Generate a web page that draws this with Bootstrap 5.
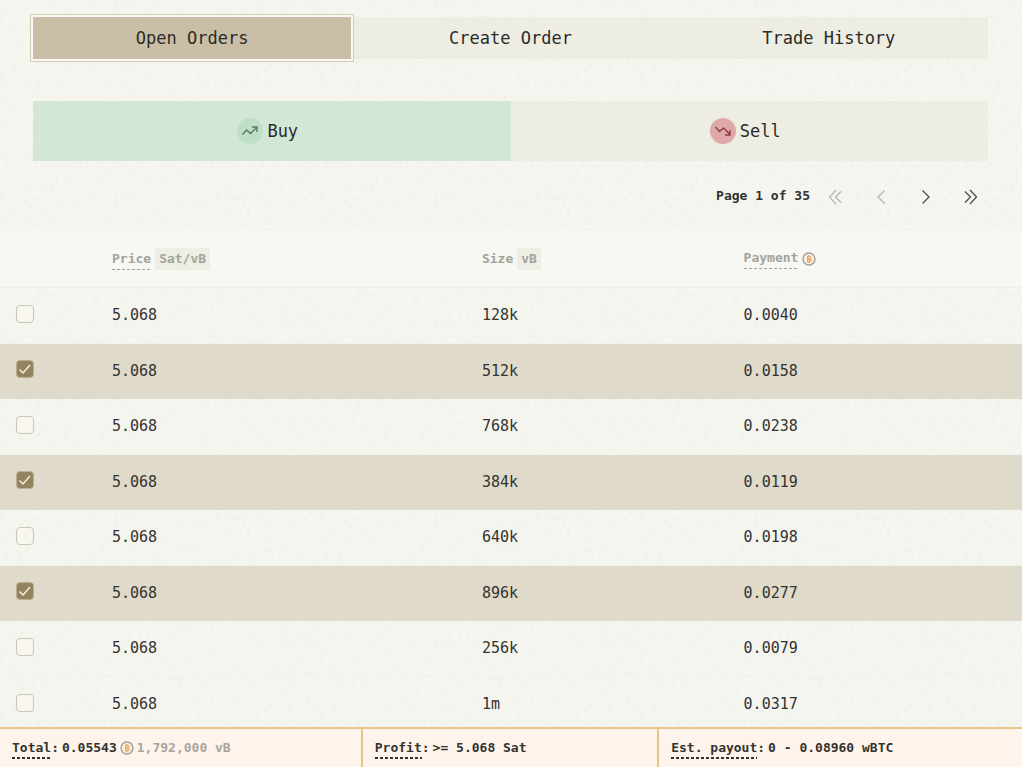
<!DOCTYPE html>
<html lang="en">
<head>
<meta charset="utf-8">
<meta name="viewport" content="width=device-width, initial-scale=1">
<title>Open Orders</title>
<link href="https://cdn.jsdelivr.net/npm/bootstrap@5.3.0/dist/css/bootstrap.min.css" rel="stylesheet">
<style>
  body { background: #fff; color: #33332f; font-family: "DejaVu Sans Mono", "Liberation Mono", monospace; font-size: 15px; line-height: 20px; }
  .sheet {
    margin-right: 2px;
    background-color: #f6f6f1;
    background-image: url("data:image/svg+xml,%3Csvg xmlns='http://www.w3.org/2000/svg' width='320' height='320'%3E%3Cfilter id='n' color-interpolation-filters='sRGB'%3E%3CfeTurbulence type='fractalNoise' baseFrequency='.22' numOctaves='3' stitchTiles='stitch'/%3E%3CfeColorMatrix values='0 0 0 0 .5 0 0 0 0 .5 0 0 0 0 .46 .5 0 0 0 -.21'/%3E%3C/filter%3E%3Crect width='320' height='320' filter='url(%23n)' opacity='.17'/%3E%3C/svg%3E");
  }
  .controls { padding: 17px 34px 0 33px; }
  .scroller { min-height: 0; scrollbar-width: none; }
  .scroller::-webkit-scrollbar { display: none; }
  .seg { border: 0; background: #edede3; color: #2b2b27; font-size: 17px; line-height: 24px; flex: 1 1 0; }
  .tab { height: 42px; }
  .tab.active { background: #cabfa6; box-shadow: 0 0 0 2px #f9f8f2, 0 0 0 3px #d3cab5; z-index: 1; }
  .sides { margin-top: 42px; }
  .side { height: 60px; gap: 4px; padding: 0 8px 0 0; }
  .side.active { background: #d3e7d7; }
  .dot { width: 26px; height: 26px; }
  .dot-up { background: #bfdfc6; color: #55805f; }
  .dot-down { background: #e0a9a9; color: #8d3a44; }
  .pager { height: 70px; font-size: 13px; gap: 10px; }
  .page-btn { border: 0; background: none; color: #55554f; width: 32px; height: 32px; padding: 0; }
  .page-btn:disabled { color: #b5b4ad; }
  .arrows { gap: 13px; margin-right: 1px; }
  .orders { table-layout: fixed; width: 100%; }
  .orders th { height: 56px; background: #f7f7f3; color: #a3a39c; font-size: 13px; padding: 0; border-bottom: 1px solid #efeee8; }
  .orders td { height: 56px; padding: 0; border-bottom: 1px solid #f1f1eb; }
  .orders .picked td { height: 55px; background: #dfdac9; border-color: #dfdac9; }
  .c-pick { width: 112px; }
  .c-price { width: 36.2%; }
  .c-size { width: 25.6%; }
  .unit { background: #eeeee4; padding: 4px; line-height: 14px; display: inline-block; margin-left: 4px; }
  .hint { display: inline-block; padding-bottom: 1px; background: repeating-linear-gradient(90deg, currentColor 0 3px, transparent 3px 5px) left bottom / 100% 1px no-repeat; }
  .totals .hint { background-size: 100% 2px; }
  .coin-gap { gap: 4px; }
  .pick { appearance: none; display: block; width: 18px; height: 18px; margin: 0 0 3px 16px; border: 1px solid #c9c7b4; border-radius: 4px; background: #f7f6f0; }
  .pick:checked { border-color: #b9af96; background: #94835f url("data:image/svg+xml,%3Csvg xmlns='http://www.w3.org/2000/svg' viewBox='0 0 16 16'%3E%3Cpath d='M2.5 8.5l3.5 3.5 7-8' fill='none' stroke='%23f8efdc' stroke-width='1.5'/%3E%3C/svg%3E") center / 16px no-repeat; }
  .totals { height: 40px; background: #fff4ec; border-top: 2px solid #e9c388; font-size: 13px; font-weight: 700; }
  .totals > div { padding-left: 12px; border-right: 2px solid #e9c388; gap: 3px; }
  .totals > div:last-child { border-right: 0; }
  .w-a { width: 35.5%; }
  .w-b { width: 29%; }
  .quiet { color: #a9a49d; }
</style>
</head>
<body>
<svg class="d-none" xmlns="http://www.w3.org/2000/svg">
  <symbol id="coin" viewBox="0 0 14 14">
    <circle cx="7" cy="7" r="6" fill="#f8efe4" stroke="#a49f98" stroke-width="1.4"/>
    <path d="M5.500 4.300h2.100a1.300 1.300 0 0 1 0 2.600H5.500zM5.500 6.900h2.400a1.400 1.400 0 0 1 0 2.800H5.500zM6.200 3.300v1M7.500 3.300v1M6.200 9.700v1M7.500 9.700v1" fill="#f9cfa6" stroke="#ef9c52" stroke-width=".9"/>
  </symbol>
</svg>
<div class="sheet vh-100 d-flex flex-column">
  <main class="scroller flex-fill overflow-auto">
    <div class="controls">
      <nav class="d-flex" aria-label="Sections">
        <button type="button" class="seg tab active position-relative">Open Orders</button>
        <button type="button" class="seg tab">Create Order</button>
        <button type="button" class="seg tab">Trade History</button>
      </nav>
      <div class="sides d-flex">
        <button type="button" class="seg side active d-flex align-items-center justify-content-center">
          <span class="dot dot-up rounded-circle d-flex align-items-center justify-content-center">
            <svg width="18" height="18" viewBox="0 0 18 18" fill="none" stroke="currentColor" stroke-width="1.4"><path d="M1.500 12.500l4-4.500 4 3.500 6-6M11 5h5v5"/></svg>
          </span>Buy
        </button>
        <button type="button" class="seg side d-flex align-items-center justify-content-center">
          <span class="dot dot-down rounded-circle d-flex align-items-center justify-content-center">
            <svg width="18" height="18" viewBox="0 0 18 18" fill="none" stroke="currentColor" stroke-width="1.4"><path d="M1.500 5l4 4.500 4-3.500 6 6M11 13h5V8"/></svg>
          </span>Sell
        </button>
      </div>
      <div class="pager d-flex align-items-center justify-content-end">
        <strong>Page 1 of 35</strong>
        <div class="arrows d-flex">
          <button type="button" class="page-btn" disabled aria-label="First page"><svg width="16" height="16" viewBox="0 0 16 16" fill="none" stroke="currentColor" stroke-width="1.2"><path d="M8 1L1.500 8 8 15M13 2.500L7.500 8l5.500 5.500"/></svg></button>
          <button type="button" class="page-btn" disabled aria-label="Previous page"><svg width="16" height="16" viewBox="0 0 16 16" fill="none" stroke="currentColor" stroke-width="1.2"><path d="M11.500 1.500L5 8l6.500 6.500"/></svg></button>
          <button type="button" class="page-btn" aria-label="Next page"><svg width="16" height="16" viewBox="0 0 16 16" fill="none" stroke="currentColor" stroke-width="1.4"><path d="M4.500 1.500L11 8l-6.500 6.500"/></svg></button>
          <button type="button" class="page-btn" aria-label="Last page"><svg width="16" height="16" viewBox="0 0 16 16" fill="none" stroke="currentColor" stroke-width="1.4"><path d="M7 1l6.500 7L7 15M2 2.500L7.500 8 2 13.500"/></svg></button>
        </div>
      </div>
    </div>
    <table class="orders align-middle">
      <colgroup><col class="c-pick"><col class="c-price"><col class="c-size"><col></colgroup>
      <thead>
        <tr>
          <th></th>
          <th scope="col"><span class="hint">Price</span><span class="unit">Sat/vB</span></th>
          <th scope="col">Size<span class="unit">vB</span></th>
          <th scope="col"><div class="coin-gap d-flex align-items-center"><span class="hint">Payment</span><svg width="14" height="14"><use href="#coin"/></svg></div></th>
        </tr>
      </thead>
      <tbody>
        <tr><td><input type="checkbox" class="pick" aria-label="Select 128k"></td><td>5.068</td><td>128k</td><td>0.0040</td></tr>
        <tr class="picked"><td><input type="checkbox" class="pick" aria-label="Select 512k" checked></td><td>5.068</td><td>512k</td><td>0.0158</td></tr>
        <tr><td><input type="checkbox" class="pick" aria-label="Select 768k"></td><td>5.068</td><td>768k</td><td>0.0238</td></tr>
        <tr class="picked"><td><input type="checkbox" class="pick" aria-label="Select 384k" checked></td><td>5.068</td><td>384k</td><td>0.0119</td></tr>
        <tr><td><input type="checkbox" class="pick" aria-label="Select 640k"></td><td>5.068</td><td>640k</td><td>0.0198</td></tr>
        <tr class="picked"><td><input type="checkbox" class="pick" aria-label="Select 896k" checked></td><td>5.068</td><td>896k</td><td>0.0277</td></tr>
        <tr><td><input type="checkbox" class="pick" aria-label="Select 256k"></td><td>5.068</td><td>256k</td><td>0.0079</td></tr>
        <tr><td><input type="checkbox" class="pick" aria-label="Select 1m"></td><td>5.068</td><td>1m</td><td>0.0317</td></tr>
      </tbody>
    </table>
  </main>
  <footer class="totals d-flex flex-shrink-0">
    <div class="w-a d-flex align-items-center"><span><span class="hint">Total</span>:</span><span>0.05543</span><svg width="14" height="14"><use href="#coin"/></svg><span class="quiet">1,792,000 vB</span></div>
    <div class="w-b d-flex align-items-center"><span><span class="hint">Profit</span>:</span><span>&gt;= 5.068 Sat</span></div>
    <div class="w-a d-flex align-items-center"><span><span class="hint">Est. payout</span>:</span><span>0 - 0.08960 wBTC</span></div>
  </footer>
</div>
<script src="https://cdn.jsdelivr.net/npm/bootstrap@5.3.0/dist/js/bootstrap.bundle.min.js"></script>
</body>
</html>
